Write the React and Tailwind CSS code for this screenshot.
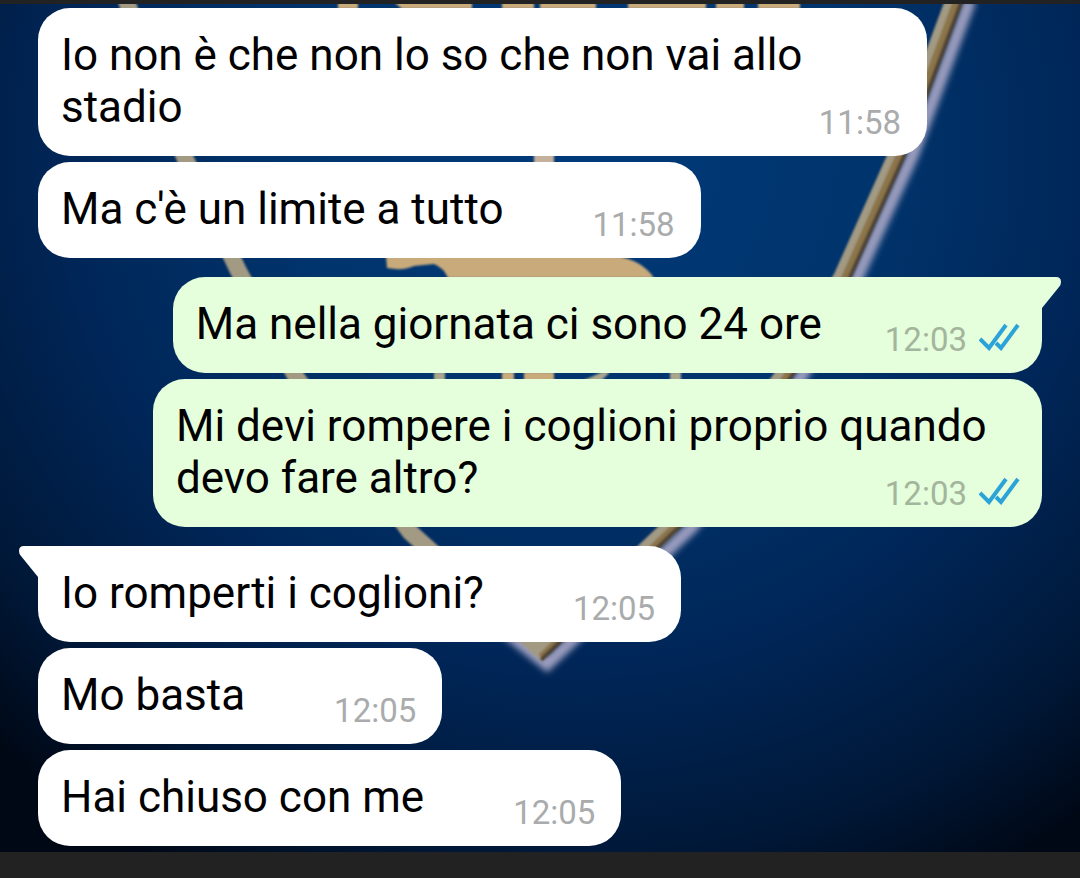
import React from 'react';

const messages = [
  { id: 1, text: 'Io non è che non lo so che non vai allo stadio', time: '11:58' },
  { id: 2, text: "Ma c'è un limite a tutto", time: '11:58' },
  { id: 3, text: 'Ma nella giornata ci sono 24 ore', time: '12:03', mine: true, first: true },
  { id: 4, text: 'Mi devi rompere i coglioni proprio quando devo fare altro?', time: '12:03', mine: true },
  { id: 5, text: 'Io romperti i coglioni?', time: '12:05', first: true },
  { id: 6, text: 'Mo basta', time: '12:05' },
  { id: 7, text: 'Hai chiuso con me', time: '12:05' },
];

// Blue wallpaper with the gold edged crest
const Wallpaper = () => (
  <svg
    className="absolute inset-0 w-full h-full"
    viewBox="0 4 1080 848"
    preserveAspectRatio="none"
    aria-hidden="true"
  >
    <defs>
      <radialGradient id="glow" gradientUnits="userSpaceOnUse" cx="580" cy="150" r="830">
        <stop offset="0" stopColor="#003a7a" />
        <stop offset="0.35" stopColor="#00346c" />
        <stop offset="0.62" stopColor="#002658" />
        <stop offset="0.85" stopColor="#001838" />
        <stop offset="1" stopColor="#000816" />
      </radialGradient>
      <filter id="soft" x="-10%" y="-10%" width="120%" height="120%">
        <feGaussianBlur stdDeviation="3" />
      </filter>
      <filter id="edge" x="-10%" y="-10%" width="120%" height="120%">
        <feGaussianBlur stdDeviation="1" />
      </filter>
    </defs>
    <rect y="4" width="1080" height="848" fill="url(#glow)" />
    <g fill="none" strokeLinejoin="miter">
      <path d="M970 0 L912 156 L857 277 L801 377 L692 527 L547 664 L504 630" stroke="#9a9cbd" strokeWidth="13" filter="url(#soft)" />
      <g filter="url(#edge)">
        <path d="M126 0 L184 156 L238 270 L296 377 L410 532 L541 650 L670 527 L782 377 L842 277 L896 156 L954 0" stroke="#a39a84" strokeWidth="17" />
        <path d="M541 657 L674 527 L786 377 L845 277 L899 156 L957 0" stroke="#8b7449" strokeWidth="7" />
        <path d="M541 660 L679 527 L791 377 L850 277 L904 156 L962 0" stroke="#4f4336" strokeWidth="4" />
      </g>
    </g>
    <g fill="#c9aa7a" filter="url(#edge)">
      <path d="M386 256 h230 q26 4 38 22 h-206 q-4 -10 -14 -14 l-20 2 q-10 5 -27 2 z" />
      <path d="M534 150 h20 v18 h-20 z" fill="#c4b09c" />
      <path d="M502 372 h12 v12 h-12 z M524 372 h30 v12 h-30 z" />
      <path d="M434 372 h11 v12 h-11 z M580 382 l22 -10 h8 l-10 10 z M670 372 h11 v12 h-11 z" fill="#a8a68c" />
      <path d="M338 2 h20 v7 h-20 z M394 2 h78 v7 h-70 z M502 2 h32 v7 h-32 z M540 2 h56 v7 h-56 z M628 2 h78 v7 h-78 z M716 2 h28 v7 h-28 z M758 2 h42 v7 h-42 z" />
    </g>
  </svg>
);

const ReadTicks = () => (
  <svg className="w-[41px] h-7 mb-1.5" viewBox="0 0 41 28" fill="none" role="img" aria-label="Letto">
    <path
      d="M1 16 L10 25 L27 2 M17 20 L22 25 L39 2"
      stroke="#2ba3d8"
      strokeWidth="4"
    />
  </svg>
);

const Tail = ({ mine }) => (
  <svg
    className={mine ? 'absolute top-0 -right-5 w-[21px] h-8' : 'absolute top-0 -left-5 w-[21px] h-8 -scale-x-100'}
    viewBox="0 0 21 32"
    fill={mine ? '#e5fedb' : '#ffffff'}
    aria-hidden="true"
  >
    <path d="M0 0 H15 Q20 0 20 5 Q20 8 18 10 L1 31 H0 Z" />
  </svg>
);

const Bubble = ({ text, time, mine, first }) => {
  const side = mine ? 'self-end bg-[#e5fedb]' : 'self-start bg-white';
  const corner = first ? (mine ? 'rounded-tr-none' : 'rounded-tl-none') : '';
  const spacing = first ? 'mt-[19px]' : 'mt-1.5';

  return (
    <li className={`relative max-w-[889px] rounded-[32px] pl-[23px] pr-[26px] pt-[21px] pb-3.5 first:mt-1 ${side} ${corner} ${spacing}`}>
      {first && <Tail mine={mine} />}
      <span className="text-[44px] leading-[52px] text-black">{text}</span>
      <span
        className={
          mine
            ? 'float-right ml-[63px] mt-[23px] flex items-center gap-3 h-[38px] text-[33px] leading-[38px] text-[#a3b59c] -mr-1'
            : 'float-right ml-[89px] mt-[23px] text-[33px] leading-[38px] text-[#a9abac]'
        }
      >
        <time>{time}</time>
        {mine && <ReadTicks />}
      </span>
    </li>
  );
};

const App = () => {
  return (
    <div className="min-h-screen flex flex-col bg-[#222222] font-['Roboto',sans-serif]">
      <main className="relative mt-1 mb-[26px] bg-[#001f48]">
        <Wallpaper />
        <ul className="relative flex flex-col px-[38px] pb-1.5">
          {messages.map((message) => (
            <Bubble key={message.id} {...message} />
          ))}
        </ul>
      </main>
    </div>
  );
};

export default App;
